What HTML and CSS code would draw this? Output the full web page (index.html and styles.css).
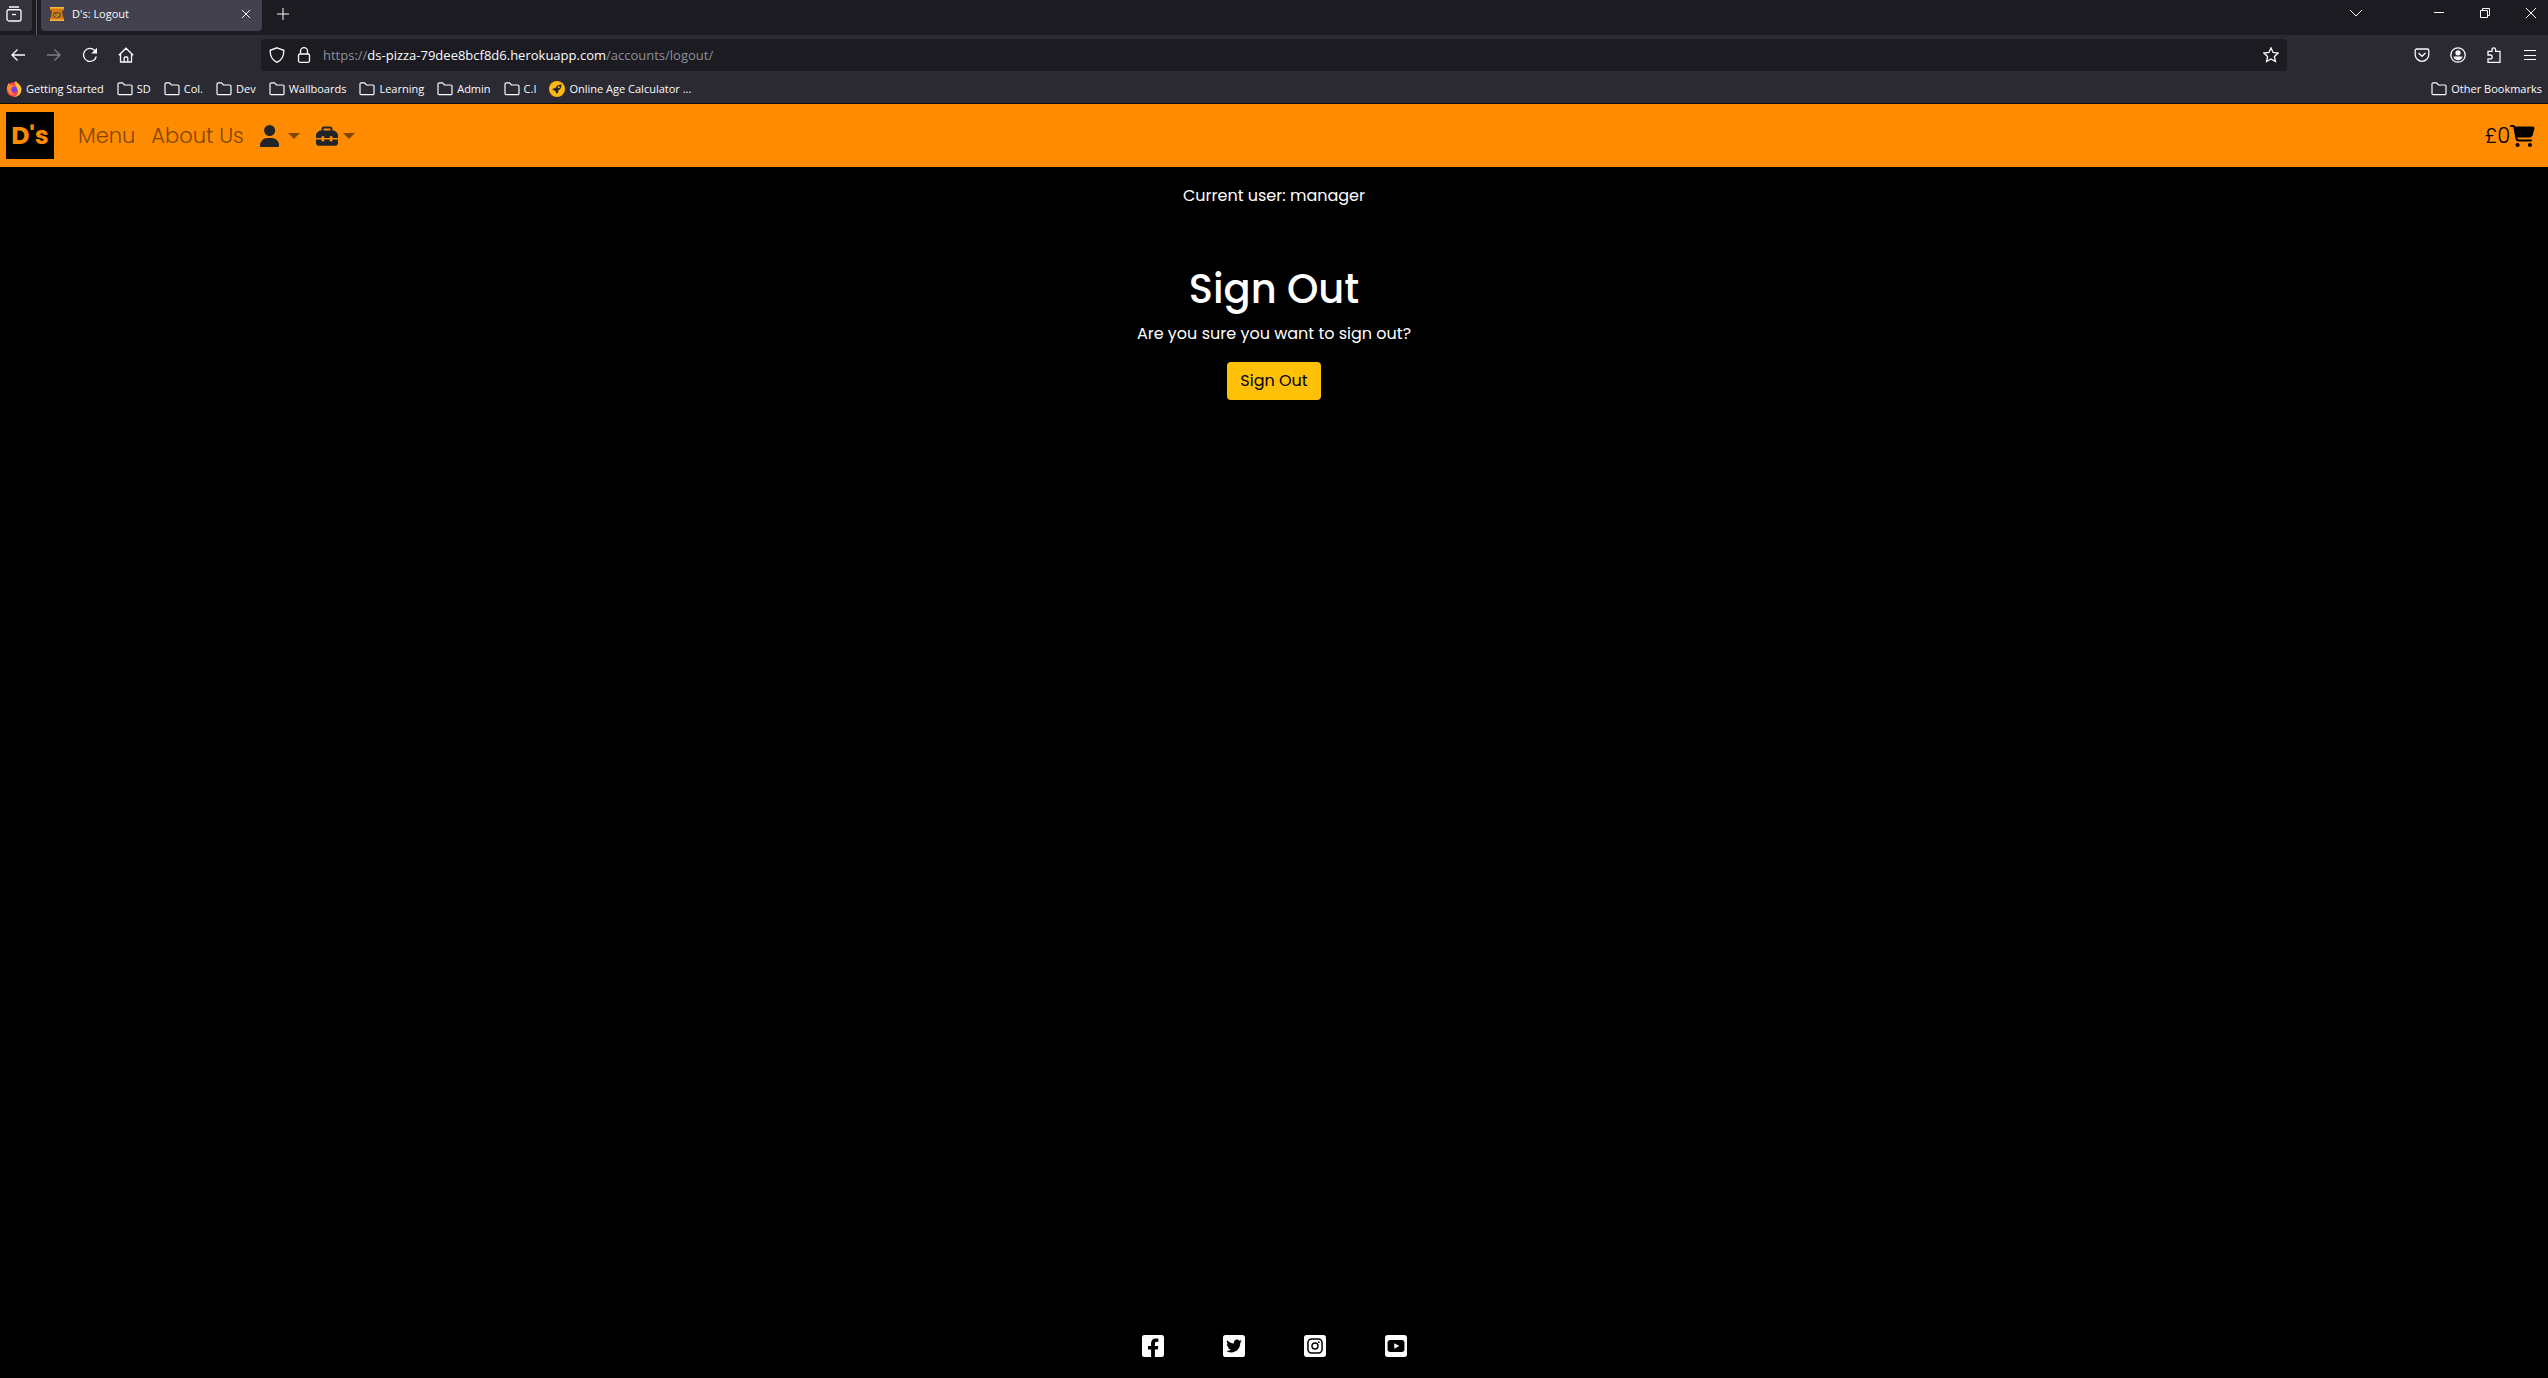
FILE: index.html
```html
<!DOCTYPE html>
<html lang="en">
<head>
<meta charset="utf-8">
<meta name="viewport" content="width=device-width, initial-scale=1">
<title>D's: Logout</title>
<link rel="stylesheet" href="styles.css">
</head>
<body>
<svg class="sprite">
  <symbol id="folder" viewBox="0 0 16 16"><path d="M1 12.500V3a1.200 1.200 0 0 1 1.200-1.200h3.300L7.500 4h6.300A1.200 1.200 0 0 1 15 5.200v7.300a1.200 1.200 0 0 1-1.200 1.200H2.200A1.200 1.200 0 0 1 1 12.500z" fill="none" stroke="currentColor" stroke-width="1.200"/></symbol>
</svg>

<div class="browser">
  <div class="tabstrip">
    <button class="view-btn" aria-label="Firefox View"><svg class="ico" viewBox="0 0 16 16"><path d="M3 1h10M1.800 3.600h12.400" /><rect x="1" y="3.600" width="14" height="11.400" rx="2"/><path d="M6 8.500h4"/></svg></button>
    <span class="divider"></span>
    <div class="tab">
      <svg class="ico favicon" viewBox="0 0 16 16"><path d="M1 1h14v3l-2 1 1 6 1 1v3H1v-3l1-1 1-6-2-1z" fill="#d9780f"/><path d="M1 1h14v1.500H1zM1 13.500h14V15H1z" fill="#f4b942"/><ellipse cx="8" cy="9" rx="4" ry="3" fill="#6b4a1b"/><path d="M5 9.500l5-2M6.500 11l4-2" stroke="#d6a13a"/></svg>
      <span class="tab-title">D's: Logout</span>
      <button class="tab-close" aria-label="Close tab"><svg viewBox="0 0 10 10"><path d="M1 1l8 8M9 1l-8 8"/></svg></button>
    </div>
    <button class="tool" aria-label="New tab"><svg class="small" viewBox="0 0 12 12"><path d="M6 0v12M0 6h12"/></svg></button>
    <div class="window-controls">
      <button class="list-tabs" aria-label="List all tabs"><svg class="small" viewBox="0 0 12 12"><path d="M0 3l6 6 6-6"/></svg></button>
      <button aria-label="Minimise"><svg viewBox="0 0 10 10"><path d="M0 4.500h10"/></svg></button>
      <button aria-label="Restore"><svg viewBox="0 0 10 10"><path d="M.5 2.500h7v7h-7zM2.500 2.500v-2h7v7h-2"/></svg></button>
      <button class="close-window" aria-label="Close window"><svg viewBox="0 0 10 10"><path d="M0 0l10 10M10 0L0 10"/></svg></button>
    </div>
  </div>

  <div class="toolbar">
    <button class="tool" aria-label="Back"><svg class="ico" viewBox="0 0 16 16"><path d="M15 8H2M7.500 2.500L2 8l5.500 5.500"/></svg></button>
    <button class="tool dim" aria-label="Forward"><svg class="ico" viewBox="0 0 16 16"><path d="M1 8h13M8.500 2.500L14 8l-5.500 5.500"/></svg></button>
    <button class="tool" aria-label="Reload"><svg class="ico" viewBox="0 0 16 16"><path d="M14.300 9.500A6.500 6.500 0 1 1 12.500 3.200"/><path d="M15 .8v5.700H9.300z" fill="currentColor" stroke="none"/></svg></button>
    <button class="tool" aria-label="Home"><svg class="ico" viewBox="0 0 16 16"><path d="M.8 8.300L8 1.200l7.200 7.100M2.500 7v8h11V7M6.200 15v-4a1 1 0 0 1 1-1h1.600a1 1 0 0 1 1 1v4"/></svg></button>
    <div class="urlbar">
      <svg class="ico" viewBox="0 0 16 16"><path d="M8 .8l6.800 2.500C15 9 13 13 8 15.300 3 13 1 9 1.200 3.300z"/></svg>
      <svg class="ico" viewBox="0 0 16 16"><rect x="2.500" y="7" width="11" height="8.300" rx="1.500"/><path d="M4.500 7V4.200a3.500 3.500 0 0 1 7 0V7"/></svg>
      <span class="url">https://<b>ds-pizza-79dee8bcf8d6.herokuapp.com</b>/accounts/logout/</span>
      <button class="star" aria-label="Bookmark this page"><svg class="ico" viewBox="0 0 16 16"><path d="M8 .9l2.100 4.600 5 .6-3.700 3.400 1 5L8 12l-4.400 2.500 1-5L.9 6.100l5-.6z"/></svg></button>
    </div>
    <div class="extras">
      <button class="tool" aria-label="Pocket"><svg class="ico" viewBox="0 0 16 16"><path d="M2.800 2h10.400A1.600 1.600 0 0 1 14.800 3.600V7.500a6.800 6.800 0 0 1-13.600 0V3.600A1.600 1.600 0 0 1 2.800 2zM4.500 6L8 9.300 11.500 6"/></svg></button>
      <button class="tool" aria-label="Account"><svg class="ico" viewBox="0 0 16 16"><circle cx="8" cy="8" r="7.200"/><circle cx="8" cy="5.800" r="2.600" fill="currentColor" stroke="none"/><path d="M3.500 9.500h9c0 2-2 3.700-4.500 3.700s-4.500-1.700-4.500-3.700z" fill="currentColor" stroke="none"/></svg></button>
      <button class="tool" aria-label="Extensions"><svg class="ico" viewBox="0 0 16 16"><path d="M2 7V4.300h4V2.600a1.800 1.800 0 0 1 3.600 0v1.700H14V15.300H2V11.800h2.300a1.900 1.900 0 0 0 0-3.800H2z"/></svg></button>
      <button class="tool" aria-label="Menu"><svg class="small" viewBox="0 0 12 12"><path d="M0 1.500h12M0 6.500h12M0 10.500h12"/></svg></button>
    </div>
  </div>

  <nav class="bookmarks" aria-label="Bookmarks">
    <a href="#"><svg class="ico plain" viewBox="0 0 16 16"><circle cx="8" cy="8.500" r="7.300" fill="#ff4055"/><path d="M8.500 2L10 0c.5 2 4.500 3.500 5.300 7.500C16 12 12.500 16 8 16c3-1.500 4.500-3.500 4-6.500z" fill="#ffc638"/><path d="M1 6l1.500-4 2.500 2 3 .5 1 1.500-3 2 0 4 3 2c-4 .5-7.500-2-8-8z" fill="#ff8a2a"/><circle cx="8.300" cy="8.500" r="3" fill="#7a3fe0"/></svg>Getting Started</a>
    <a href="#"><svg class="ico"><use href="#folder"/></svg>SD</a>
    <a href="#"><svg class="ico"><use href="#folder"/></svg>Col.</a>
    <a href="#"><svg class="ico"><use href="#folder"/></svg>Dev</a>
    <a href="#"><svg class="ico"><use href="#folder"/></svg>Wallboards</a>
    <a href="#"><svg class="ico"><use href="#folder"/></svg>Learning</a>
    <a href="#"><svg class="ico"><use href="#folder"/></svg>Admin</a>
    <a href="#"><svg class="ico"><use href="#folder"/></svg>C.I</a>
    <a href="#"><svg class="ico plain" viewBox="0 0 16 16"><circle cx="8" cy="8" r="8" fill="#fdb913"/><path d="M12.500 3.500c-3 0-5 1.500-6 3.500l-2.500.5L3.500 9l2 .5 1.200 1.200.8 2 1.500-1 .3-2.200c2.200-1.200 3.200-3 3.200-6z" fill="#23252b"/><circle cx="9.800" cy="6.200" r="1" fill="#fdb913"/></svg>Online Age Calculator ...</a>
    <a class="other" href="#"><svg class="ico"><use href="#folder"/></svg>Other Bookmarks</a>
  </nav>
</div>

<header class="navbar">
  <a class="brand" href="#">D's</a>
  <a class="nav-link" href="#">Menu</a>
  <a class="nav-link" href="#">About Us</a>
  <button class="dropdown account" aria-label="Account"><svg viewBox="0 0 448 512"><path d="M224 256A128 128 0 1 0 224 0a128 128 0 1 0 0 256zm-45.700 48C79.800 304 0 383.800 0 482.300C0 498.700 13.300 512 29.700 512H418.300c16.400 0 29.700-13.300 29.700-29.700C448 383.800 368.200 304 269.700 304H178.300z"/></svg><i class="caret"></i></button>
  <button class="dropdown manage" aria-label="Management"><svg viewBox="0 0 512 512"><path d="M176 88v40H336V88c0-4.400-3.600-8-8-8H184c-4.400 0-8 3.600-8 8zm-48 40V88c0-30.900 25.100-56 56-56H328c30.900 0 56 25.100 56 56v40h28.100c12.700 0 24.900 5.100 33.900 14.100l51.900 51.900c9 9 14.100 21.200 14.100 33.900V304H384V288c0-17.700-14.300-32-32-32s-32 14.300-32 32v16H192V288c0-17.700-14.300-32-32-32s-32 14.300-32 32v16H0V227.900c0-12.700 5.100-24.900 14.100-33.900l51.900-51.900c9-9 21.200-14.100 33.900-14.100H128zM0 416V336H128v16c0 17.700 14.300 32 32 32s32-14.300 32-32V336H320v16c0 17.700 14.300 32 32 32s32-14.300 32-32V336H512v80c0 35.300-28.700 64-64 64H64c-35.300 0-64-28.700-64-64z"/></svg><i class="caret"></i></button>
  <a class="cart" href="#">£0<svg viewBox="0 0 576 512"><path d="M0 24C0 10.700 10.700 0 24 0H69.500c22 0 41.500 12.800 50.600 32h411c26.300 0 45.500 25 38.600 50.400l-41 152.300c-8.500 31.400-37 53.300-69.500 53.300H170.700l5.400 28.500c2.200 11.300 12.100 19.500 23.600 19.500H488c13.300 0 24 10.700 24 24s-10.700 24-24 24H199.700c-34.600 0-64.300-24.600-70.700-58.500L77.400 54.500c-.7-3.800-4-6.500-7.900-6.500H24C10.700 48 0 37.300 0 24zM128 464a48 48 0 1 1 96 0 48 48 0 1 1 -96 0zm336-48a48 48 0 1 1 0 96 48 48 0 1 1 0-96z"/></svg></a>
</header>

<main>
  <p class="user">Current user: manager</p>
  <h1>Sign Out</h1>
  <p class="question">Are you sure you want to sign out?</p>
  <form action="#"><button class="sign-out" type="submit">Sign Out</button></form>
</main>

<footer>
  <a href="#" aria-label="Facebook"><svg viewBox="0 32 448 448"><path d="M400 32H48A48 48 0 0 0 0 80v352a48 48 0 0 0 48 48h137.250V327.690h-63V256h63v-54.640c0-62.150 37-96.480 93.670-96.480 27.140 0 55.520 4.840 55.520 4.840v61h-31.270c-30.810 0-40.420 19.120-40.420 38.730V256h68.780l-11 71.690h-57.780V480H400a48 48 0 0 0 48-48V80a48 48 0 0 0-48-48z"/></svg></a>
  <a href="#" aria-label="Twitter"><svg viewBox="0 32 448 448"><path d="M400 32H48C21.500 32 0 53.500 0 80v352c0 26.500 21.500 48 48 48h352c26.500 0 48-21.500 48-48V80c0-26.500-21.500-48-48-48zm-48.900 158.800c.2 2.800.2 5.700.2 8.500 0 86.700-66 186.600-186.600 186.600-37.200 0-71.700-10.800-100.700-29.400 5.300.6 10.400.8 15.800.8 30.700 0 58.900-10.400 81.400-28-28.800-.6-53-19.500-61.300-45.500 10.100 1.500 19.200 1.500 29.600-1.200-30-6.100-52.500-32.500-52.500-64.400v-.8c8.700 4.900 18.900 7.900 29.600 8.300a65.447 65.447 0 0 1-29.200-54.600c0-12.200 3.200-23.400 8.900-33.100 32.300 39.800 80.800 65.800 135.200 68.600-9.300-44.500 24-80.600 64-80.600 18.900 0 35.900 7.900 47.900 20.700 14.800-2.800 29-8.300 41.600-15.800-4.900 15.200-15.200 28-28.800 36.100 13.200-1.400 26-5.100 37.800-10.200-8.900 13.100-20.100 24.700-32.900 34z"/></svg></a>
  <a href="#" aria-label="Instagram"><svg viewBox="0 0 448 448"><rect width="448" height="448" rx="56"/><rect x="80" y="80" width="288" height="288" rx="76" fill="none" stroke="#000" stroke-width="30"/><circle cx="224" cy="224" r="62" fill="none" stroke="#000" stroke-width="28"/><circle cx="302" cy="146" r="18" fill="#000"/></svg></a>
  <a href="#" aria-label="YouTube"><svg viewBox="0 0 448 448"><rect width="448" height="448" rx="56"/><rect x="52" y="102" width="344" height="244" rx="56" fill="#000"/><path d="M188 166v116l102-58z"/></svg></a>
</footer>
</body>
</html>
```
FILE: styles.css
```css
* { box-sizing: border-box; }

body {
  margin: 0;
  min-height: 100vh;
  display: flex;
  flex-direction: column;
  background: #000;
  color: #fff;
  font: 16px/24px Poppins, Inter, sans-serif;
}

button {
  padding: 0;
  border: 0;
  background: none;
  color: inherit;
  font: inherit;
}

a { color: inherit; text-decoration: none; }

.sprite { display: none; }

/* Browser chrome */
.browser {
  background: #2b2a33;
  color: #fbfbfe;
  font: 11px/16px "Segoe UI", "Open Sans", sans-serif;
  border-bottom: 1px solid #0c0c0d;
}
.browser svg {
  display: block;
  flex: none;
  width: 10px;
  height: 10px;
  fill: none;
  stroke: currentColor;
}
.browser svg.ico { width: 16px; height: 16px; stroke-width: 1.3; }
.browser svg.small { width: 12px; height: 12px; }
.browser svg.plain, .browser svg.favicon { stroke: none; }

.tabstrip {
  display: flex;
  height: 35px;
  background: #1c1b22;
}
.view-btn {
  width: 32px;
  height: 31px;
  padding: 0 0 4px 6px;
  background: #35343d;
  border-radius: 0 0 4px 0;
}
.divider { width: 1px; margin: 0 4px; background: #5b5b66; }
.tab {
  display: flex;
  align-items: center;
  gap: 7px;
  width: 221px;
  height: 31px;
  padding: 0 11px 4px 8px;
  background: #42414d;
  border-radius: 0 0 4px 4px;
}
.tab-title { flex: 1; }
.tabstrip > .tool { height: 27px; margin-left: 3px; }
.window-controls { display: flex; height: 26px; margin-left: auto; }
.window-controls button { display: grid; place-items: center; width: 46px; padding-right: 12px; }
.window-controls .close-window { width: 34px; padding-right: 0; }
.window-controls .list-tabs { width: 83px; padding-right: 49px; }

.tool { display: grid; place-items: center; width: 36px; height: 36px; }
.dim { opacity: .4; }

.toolbar { display: flex; align-items: center; height: 40px; }
.urlbar {
  display: flex;
  align-items: center;
  gap: 11px;
  flex: 1;
  height: 32px;
  margin-left: 117px;
  padding: 0 8px;
  background: #1c1b22;
  border-radius: 4px;
}
.url { flex: 1; color: #8f8f98; font-size: 13px; }
.url b { color: #fbfbfe; font-weight: 400; }
.extras { display: flex; margin-left: 117px; }

.bookmarks { display: flex; align-items: center; gap: 13px; height: 28px; padding: 0 6px; }
.bookmarks a { display: flex; align-items: center; gap: 4px; white-space: nowrap; }
.bookmarks .other { margin-left: auto; }

/* Site navigation */
.navbar {
  display: flex;
  align-items: center;
  height: 63px;
  padding: 0 13px 0 6px;
  background: #ff8c00;
  font-size: 21px;
  font-weight: 300;
}
.brand {
  display: grid;
  place-items: center;
  width: 48px;
  height: 47px;
  margin-right: 24px;
  background: #000;
  color: #ff8c00;
  font-size: 25px;
  font-weight: 700;
}
.nav-link { margin-right: 16px; color: #804600; }
.dropdown { display: flex; align-items: center; margin-right: 16px; }
.dropdown svg { height: 22px; fill: #212529; }
.account { gap: 9px; }
.manage { gap: 5px; }
.caret {
  border: 6px solid transparent;
  border-top-color: #804600;
  border-bottom: 0;
}
.cart { display: flex; align-items: center; margin-left: auto; color: #000; }
.cart svg { height: 22px; }

/* Page content */
main { flex: 1; text-align: center; }
p, h1 { margin: 0; }
.user { padding-top: 17px; }
h1 { margin-top: 57px; font-size: 40px; font-weight: 500; line-height: 48px; }
.question { margin: 9px 0 16px; }
.sign-out {
  height: 38px;
  padding: 0 13px;
  background: #ffc107;
  color: #000;
  border-radius: 4px;
}

footer { display: flex; justify-content: center; gap: 59px; padding-bottom: 21px; }
footer svg { display: block; width: 22px; height: 22px; fill: #fff; }
```
